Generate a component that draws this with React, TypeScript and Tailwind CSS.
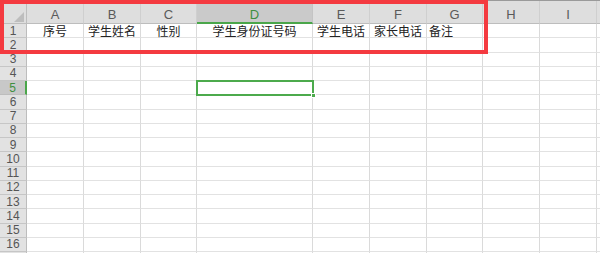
import React from "react";

const cols = [
  { l: "A", w: "w-[57px]" },
  { l: "B", w: "w-[57px]" },
  { l: "C", w: "w-[56px]" },
  { l: "D", w: "w-[116px]" },
  { l: "E", w: "w-[57px]" },
  { l: "F", w: "w-[57px]" },
  { l: "G", w: "w-[56px]" },
  { l: "H", w: "w-[57px]" },
  { l: "I", w: "w-[57px]" },
  { l: "", w: "w-[40px]" },
];

const row1: { t: string; align: string }[] = [
  { t: "序号", align: "justify-center" },
  { t: "学生姓名", align: "justify-center" },
  { t: "性别", align: "justify-center" },
  { t: "学生身份证号码", align: "justify-center" },
  { t: "学生电话", align: "justify-center" },
  { t: "家长电话", align: "justify-center" },
  { t: "备注", align: "justify-start pl-[2px]" },
  { t: "", align: "" },
  { t: "", align: "" },
  { t: "", align: "" },
];

export default function App() {
  const rows = Array.from({ length: 17 }, (_, i) => i + 1);
  return (
    <div
      className="relative w-[600px] h-[253px] overflow-hidden bg-white"
      style={{ fontFamily: '"Liberation Sans", "Noto Sans CJK SC", sans-serif' }}
    >
      {/* column header */}
      <div className="flex h-[24px] border-t border-[#9a9a9a] bg-[#dedede]">
        <div className="relative w-[27px] shrink-0 border-r border-b border-[#bdbdbd]">
          <svg className="absolute left-[14px] top-[11px]" width="10" height="10" viewBox="0 0 10 10">
            <polygon points="10,0 10,10 0,10" fill="#bdbdbd" />
          </svg>
        </div>
        {cols.map((c) => {
          const sel = c.l === "D";
          return (
            <div
              key={c.l || "x"}
              className={`${c.w} shrink-0 flex items-center justify-center pt-[5px] border-r text-[13px] leading-none ${
                sel
                  ? "bg-[#cacaca] text-[#3f8f3f] border-b-2 border-b-[#4aa64a] border-r-[#c4c4c4]"
                  : "text-[#5a5a5a] border-b border-b-[#bdbdbd] border-r-[#cfcfcf]"
              }`}
            >
              {c.l}
            </div>
          );
        })}
      </div>
      {rows.map((r) => {
        const sel = r === 5;
        return (
          <div key={r} className="flex h-[14.25px]">
            <div
              className={`w-[27px] shrink-0 flex items-center justify-center text-[12px] leading-none overflow-hidden border-b ${
                sel
                  ? "bg-[#c8c8c8] text-[#3f8f3f] border-r-2 border-r-[#4aa64a] border-b-[#bdbdbd]"
                  : "bg-[#e2e2e2] text-[#555555] border-r border-r-[#bdbdbd] border-b-[#c6c6c6]"
              }`}
            >
              {r <= 16 ? r : ""}
            </div>
            {cols.map((c, ci) => (
              <div
                key={ci}
                className={`${c.w} shrink-0 flex items-center border-r border-b border-r-[#dadada] border-b-[#e2e2e2] text-[12px] leading-none text-[#222222] whitespace-nowrap ${
                  r === 1 ? `${row1[ci].align} pt-[2px]` : ""
                }`}
              >
                {r === 1 ? row1[ci].t : ""}
              </div>
            ))}
          </div>
        );
      })}
      {/* selected cell D5 */}
      <div className="absolute left-[196px] top-[80px] w-[118px] h-[16px] border-2 border-[#4caa4c]" />
      <div className="absolute left-[311px] top-[93px] w-[5px] h-[5px] bg-[#4caa4c] border border-white" />
      {/* red highlight box */}
      <div className="absolute left-0 top-0 w-[488px] h-[54px] border-[4px] border-[#f43a40]" />
    </div>
  );
}
